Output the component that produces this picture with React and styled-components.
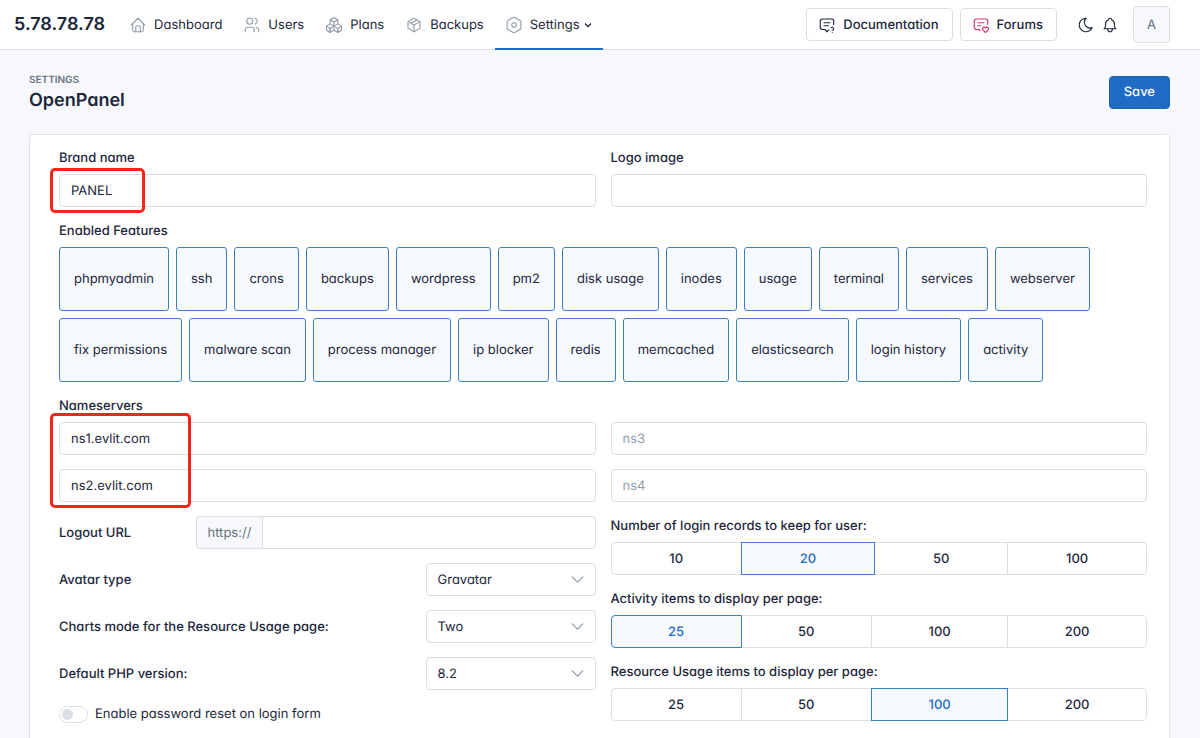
import React, { useState } from 'react';
import styled, { createGlobalStyle } from 'styled-components';

const GlobalStyle = createGlobalStyle`
  *, *::before, *::after {
    box-sizing: border-box;
  }

  body {
    margin: 0;
    background: #f6f8fb;
    color: #1d273b;
    font-family: Inter, "Liberation Sans", sans-serif;
    font-feature-settings: "cv03", "cv04", "cv11";
    font-size: 13px;
    line-height: 20px;
    text-rendering: geometricPrecision;
    -webkit-font-smoothing: antialiased;
  }

  button, input, select {
    font: inherit;
    font-feature-settings: inherit;
    text-rendering: inherit;
    color: inherit;
  }
`;

const Header = styled.header`
  display: flex;
  align-items: center;
  height: 50px;
  padding: 0 30px 0 14px;
  background: #fff;
  border-bottom: 1px solid #dadfe5;
`;

const Brand = styled.a`
  margin-right: 14px;
  color: #1d273b;
  font-size: 18px;
  font-weight: 600;
  text-decoration: none;
`;

const Nav = styled.nav`
  display: flex;
  align-self: stretch;
`;

const NavLink = styled.a`
  display: flex;
  align-items: center;
  gap: 7px;
  height: 50px;
  padding: 0 11px 0 10px;
  border-bottom: 2px solid ${({ $active }) => ($active ? '#206bc4' : 'transparent')};
  border-top: 2px solid transparent;
  color: #1d273b;
  text-decoration: none;

  > svg:first-child {
    color: #929dab;
  }
`;

const Caret = styled.svg`
  width: 8px;
  height: 8px;
  margin-left: -3px;
`;

const Tools = styled.div`
  display: flex;
  align-items: center;
  gap: 7px;
  margin-left: auto;
`;

const ToolLink = styled.a`
  display: flex;
  align-items: center;
  gap: 7px;
  height: 33px;
  padding: 0 13px 0 11px;
  background: #fff;
  border: 1px solid #dadfe5;
  border-radius: 4px;
  color: #1d273b;
  font-weight: 500;
  text-decoration: none;

  svg {
    color: ${({ $iconColor }) => $iconColor || 'inherit'};
  }
`;

const IconGroup = styled.div`
  display: flex;
  gap: 6px;
  margin: 0 7px 0 13px;
`;

const IconButton = styled.button`
  display: flex;
  padding: 0;
  background: none;
  border: 0;
  cursor: pointer;
`;

const Avatar = styled.button`
  width: 37px;
  height: 37px;
  padding: 0;
  background: #f6f8fb;
  border: 1px solid #dadfe5;
  border-radius: 4px;
  color: #667382;
`;

const Container = styled.main`
  padding: 0 30px 0 29px;
`;

const PageHeader = styled.div`
  display: flex;
  align-items: center;
  justify-content: space-between;
  padding: 21px 0;
`;

const Pretitle = styled.div`
  color: #667382;
  font-size: 10px;
  font-weight: 600;
  line-height: 18px;
  text-transform: uppercase;
`;

const Title = styled.h1`
  margin: 0;
  font-size: 18px;
  font-weight: 600;
  line-height: 24px;
`;

const SaveButton = styled.button`
  height: 33px;
  padding: 0 14px;
  background: #206bc4;
  border: 1px solid #1d62b4;
  border-radius: 4px;
  color: #f6f8fb;
  font-weight: 500;
`;

const Card = styled.form`
  display: flex;
  flex-direction: column;
  padding: 13px 22px 30px 29px;
  background: #fff;
  border: 1px solid #dfe4ea;
  border-radius: 4px;
  box-shadow: 0 2px 4px rgba(29, 39, 59, 0.04);
`;

const Columns = styled.div`
  display: grid;
  grid-template-columns: 1fr 1fr;
  column-gap: 15px;
  row-gap: 14px;
`;

const Stack = styled.div`
  display: flex;
  flex-direction: column;
  gap: 14px;
`;

const Label = styled.label`
  display: block;
  margin-bottom: ${({ $inline }) => ($inline ? 0 : '6px')};
  font-weight: 500;
`;

const Field = styled.div`
  position: relative;
`;

const Input = styled.input`
  display: block;
  width: 100%;
  min-width: 0;
  height: 33px;
  padding: 0 11px;
  background: #fff;
  border: 1px solid #dadfe5;
  border-radius: ${({ $joined }) => ($joined ? '0 4px 4px 0' : '4px')};
  outline: 0;

  &::placeholder {
    color: #929dab;
    opacity: 1;
  }
`;

const Highlight = styled.div`
  position: absolute;
  top: ${({ $top }) => $top};
  bottom: -6px;
  left: -9px;
  width: ${({ $width }) => $width};
  border: 3px solid #fb2418;
  border-radius: 5px;
  pointer-events: none;
`;

const Section = styled.fieldset`
  min-width: 0;
  margin: 14px 0 0;
  padding: 0;
  border: 0;
`;

const Legend = styled.legend`
  margin-bottom: 6px;
  padding: 0;
  font-weight: 500;
`;

const Features = styled.div`
  display: flex;
  flex-wrap: wrap;
  gap: 7px;
`;

const HiddenInput = styled.input`
  position: absolute;
  opacity: 0;
  pointer-events: none;
`;

const Feature = styled.label`
  display: flex;
  align-items: center;
  height: 64px;
  padding: 0 14px;
  border: 1px solid #dadfe5;
  border-radius: 3px;
  cursor: pointer;

  &:has(input:checked) {
    background: #f6f9fe;
    border-color: #3b7fcb;
  }
`;

const SettingRow = styled.div`
  display: flex;
  align-items: center;
  justify-content: space-between;
`;

const UrlGroup = styled.div`
  display: flex;
  width: 400px;
`;

const Prefix = styled.span`
  display: flex;
  align-items: center;
  padding: 0 11px;
  background: #f6f8fb;
  border: 1px solid #dadfe5;
  border-right: 0;
  border-radius: 4px 0 0 4px;
  color: #667382;
`;

const SelectBox = styled.div`
  position: relative;
  width: 170px;

  svg {
    position: absolute;
    top: 6px;
    right: 8px;
    color: #929dab;
    pointer-events: none;
  }
`;

const Select = styled.select`
  display: block;
  width: 100%;
  height: 33px;
  padding: 0 11px;
  appearance: none;
  background: #fff;
  border: 1px solid #dadfe5;
  border-radius: 4px;
`;

const Switch = styled.label`
  display: flex;
  align-items: center;
  gap: 7px;
`;

const SwitchInput = styled.input`
  width: 29px;
  height: 17px;
  margin: 0;
  padding: 2px;
  appearance: none;
  background: #fff;
  border: 1px solid #dadfe5;
  border-radius: 9px;

  &::before {
    content: "";
    display: block;
    width: 11px;
    height: 11px;
    background: #dadfe5;
    border-radius: 50%;
  }

  &:checked {
    padding-left: 14px;
    background: #206bc4;
  }
`;

const Segments = styled.div`
  display: flex;
`;

const Segment = styled.label`
  display: flex;
  flex: 1 1 auto;
  align-items: center;
  justify-content: center;
  height: 33px;
  padding: 0 15px;
  border: 1px solid #dadfe5;
  font-weight: 500;
  cursor: pointer;

  & + & {
    margin-left: -1px;
  }

  &:first-child {
    border-radius: 4px 0 0 4px;
  }

  &:last-child {
    border-radius: 0 4px 4px 0;
  }

  &:has(input:checked) {
    z-index: 1;
    background: #f6f9fe;
    border-color: #3b7fcb;
    color: #206bc4;
  }
`;

const icons = {
  home: ['M5 12l-2 0l9 -9l9 9l-2 0', 'M5 12v7a2 2 0 0 0 2 2h10a2 2 0 0 0 2 -2v-7', 'M9 21v-6a2 2 0 0 1 2 -2h2a2 2 0 0 1 2 2v6'],
  users: ['M9 7m-4 0a4 4 0 1 0 8 0a4 4 0 1 0 -8 0', 'M3 21v-2a4 4 0 0 1 4 -4h4a4 4 0 0 1 4 4v2', 'M16 3.13a4 4 0 0 1 0 7.75', 'M21 21v-2a4 4 0 0 0 -3 -3.85'],
  packages: ['M7 16.5l-5 -3l5 -3l5 3v5.5l-5 3z', 'M2 13.5v5.5l5 3', 'M7 16.545l5 -3.03', 'M17 16.5l-5 -3l5 -3l5 3v5.5l-5 3z', 'M12 19l5 3', 'M17 16.5l5 -3', 'M12 13.5v-5.5l-5 -3l5 -3l5 3v5.5', 'M7 5.03v5.455', 'M12 8l5 -3', 'M7 16.5v5.5', 'M17 16.5v5.5'],
  package: ['M12 3l8 4.5l0 9l-8 4.5l-8 -4.5l0 -9l8 -4.5', 'M12 12l8 -4.5', 'M12 12l0 9', 'M12 12l-8 -4.5', 'M16 5.25l-8 4.5'],
  nut: ['M20 6l-7 -4a2 2 0 0 0 -2 0l-7 4a2 2 0 0 0 -1.2 1.8v8.4a2 2 0 0 0 1.2 1.8l7 4a2 2 0 0 0 2 0l7 -4a2 2 0 0 0 1.2 -1.8v-8.4a2 2 0 0 0 -1.2 -1.8z', 'M12 12m-3 0a3 3 0 1 0 6 0a3 3 0 1 0 -6 0'],
  question: ['M8 9h8', 'M8 13h6', 'M14.5 18.5l-2.5 2.5l-3 -3h-3a3 3 0 0 1 -3 -3v-8a3 3 0 0 1 3 -3h12a3 3 0 0 1 3 3v4.5', 'M19 22v.01', 'M19 19a2.003 2.003 0 0 0 .914 -3.782a1.98 1.98 0 0 0 -2.414 .483'],
  heart: ['M8 9h8', 'M8 13h3.5', 'M10.5 19.5l-1.5 -1.5h-3a3 3 0 0 1 -3 -3v-8a3 3 0 0 1 3 -3h12a3 3 0 0 1 3 3v4', 'M18 22l3.35 -3.284a2.143 2.143 0 0 0 .005 -3.071a2.242 2.242 0 0 0 -3.129 -.006l-.224 .22l-.223 -.22a2.242 2.242 0 0 0 -3.128 -.006a2.143 2.143 0 0 0 -.006 3.071l3.355 3.296z'],
  moon: ['M12 3c.132 0 .263 0 .393 0a7.5 7.5 0 0 0 7.92 12.446a9 9 0 1 1 -8.313 -12.454z'],
  bell: ['M10 5a2 2 0 1 1 4 0a7 7 0 0 1 4 6v3a4 4 0 0 0 2 3h-16a4 4 0 0 0 2 -3v-3a7 7 0 0 1 4 -6', 'M9 17v1a3 3 0 0 0 6 0v-1'],
  chevron: ['M6 9l6 6l6 -6'],
};

const Icon = ({ name, size = 18 }) => (
  <svg
    width={size}
    height={size}
    viewBox="0 0 24 24"
    fill="none"
    stroke="currentColor"
    strokeWidth="1.5"
    strokeLinecap="round"
    strokeLinejoin="round"
    aria-hidden="true"
  >
    {icons[name].map((d) => <path key={d} d={d} />)}
  </svg>
);

const navItems = [
  { label: 'Dashboard', icon: 'home' },
  { label: 'Users', icon: 'users' },
  { label: 'Plans', icon: 'packages' },
  { label: 'Backups', icon: 'package' },
  { label: 'Settings', icon: 'nut', active: true },
];

const features = [
  'phpmyadmin', 'ssh', 'crons', 'backups', 'wordpress', 'pm2', 'disk usage', 'inodes',
  'usage', 'terminal', 'services', 'webserver', 'fix permissions', 'malware scan',
  'process manager', 'ip blocker', 'redis', 'memcached', 'elasticsearch',
  'login history', 'activity',
];

const ChoiceField = ({ label, name, options, initial }) => {
  const [value, setValue] = useState(initial);

  return (
    <div role="radiogroup" aria-label={label}>
      <Label as="div">{label}</Label>
      <Segments>
        {options.map((option) => (
          <Segment key={option}>
            <HiddenInput
              type="radio"
              name={name}
              checked={value === option}
              onChange={() => setValue(option)}
            />
            {option}
          </Segment>
        ))}
      </Segments>
    </div>
  );
};

const SelectField = ({ id, label, options }) => (
  <SettingRow>
    <Label htmlFor={id} $inline>{label}</Label>
    <SelectBox>
      <Select id={id}>
        {options.map((option) => <option key={option}>{option}</option>)}
      </Select>
      <Icon name="chevron" size={21} />
    </SelectBox>
  </SettingRow>
);

const App = () => {
  return (
    <>
      <GlobalStyle />
      <Header>
        <Brand href="#">5.78.78.78</Brand>
        <Nav>
          {navItems.map((item) => (
            <NavLink href="#" key={item.label} $active={item.active}>
              <Icon name={item.icon} />
              <span>{item.label}</span>
              {item.active && (
                <Caret viewBox="0 0 8 8" fill="none" stroke="currentColor" strokeWidth="1.3" aria-hidden="true">
                  <path d="M1 2.5l3 3l3 -3" />
                </Caret>
              )}
            </NavLink>
          ))}
        </Nav>
        <Tools>
          <ToolLink href="#"><Icon name="question" />Documentation</ToolLink>
          <ToolLink href="#" $iconColor="#d6336c"><Icon name="heart" />Forums</ToolLink>
          <IconGroup>
            <IconButton aria-label="Dark mode"><Icon name="moon" /></IconButton>
            <IconButton aria-label="Notifications"><Icon name="bell" /></IconButton>
          </IconGroup>
          <Avatar>A</Avatar>
        </Tools>
      </Header>

      <Container>
        <PageHeader>
          <div>
            <Pretitle>Settings</Pretitle>
            <Title>OpenPanel</Title>
          </div>
          <SaveButton form="settings">Save</SaveButton>
        </PageHeader>

        <Card id="settings" onSubmit={(e) => e.preventDefault()}>
          <Columns>
            <div>
              <Label htmlFor="brand">Brand name</Label>
              <Field>
                <Input id="brand" defaultValue="PANEL" />
                <Highlight $top="-6px" $width="95px" />
              </Field>
            </div>
            <div>
              <Label htmlFor="logo">Logo image</Label>
              <Input id="logo" />
            </div>
          </Columns>

          <Section>
            <Legend>Enabled Features</Legend>
            <Features>
              {features.map((feature) => (
                <Feature key={feature}>
                  <HiddenInput type="checkbox" defaultChecked />
                  {feature}
                </Feature>
              ))}
            </Features>
          </Section>

          <Section>
            <Legend>Nameservers</Legend>
            <Columns>
              <Field>
                <Stack>
                  <Input aria-label="Nameserver 1" defaultValue="ns1.evlit.com" />
                  <Input aria-label="Nameserver 2" defaultValue="ns2.evlit.com" />
                </Stack>
                <Highlight $top="-9px" $width="141px" />
              </Field>
              <Stack>
                <Input aria-label="Nameserver 3" placeholder="ns3" />
                <Input aria-label="Nameserver 4" placeholder="ns4" />
              </Stack>
              <Stack>
                <SettingRow>
                  <Label htmlFor="logout" $inline>Logout URL</Label>
                  <UrlGroup>
                    <Prefix>https://</Prefix>
                    <Input id="logout" $joined />
                  </UrlGroup>
                </SettingRow>
                <SelectField id="avatar" label="Avatar type" options={['Gravatar', 'Letter', 'Icon']} />
                <SelectField id="charts" label="Charts mode for the Resource Usage page:" options={['Two', 'One', 'None']} />
                <SelectField id="php" label="Default PHP version:" options={['8.2', '8.1', '8.0']} />
                <Switch>
                  <SwitchInput type="checkbox" />
                  Enable password reset on login form
                </Switch>
              </Stack>
              <Stack>
                <ChoiceField name="logins" label="Number of login records to keep for user:" options={['10', '20', '50', '100']} initial="20" />
                <ChoiceField name="activity" label="Activity items to display per page:" options={['25', '50', '100', '200']} initial="25" />
                <ChoiceField name="usage" label="Resource Usage items to display per page:" options={['25', '50', '100', '200']} initial="100" />
              </Stack>
            </Columns>
          </Section>
        </Card>
      </Container>
    </>
  );
};

export default App;
